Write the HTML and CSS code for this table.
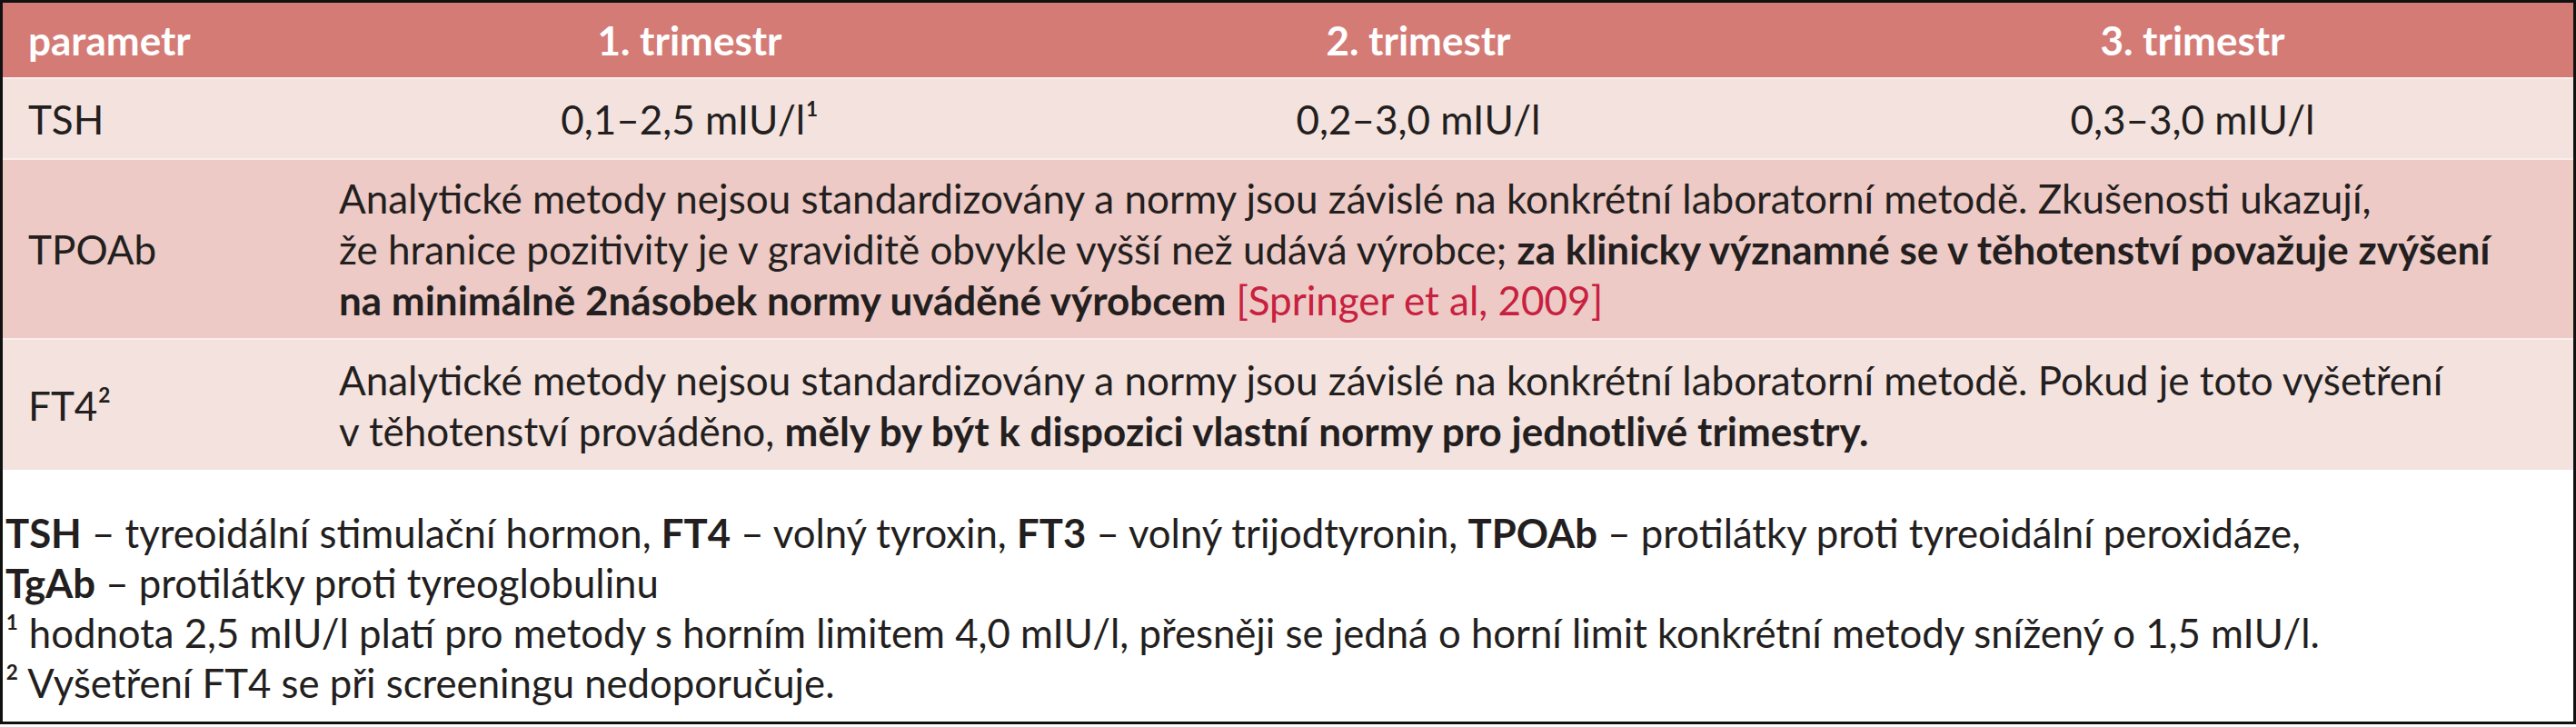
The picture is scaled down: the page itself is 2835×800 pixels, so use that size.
FILE: index.html
```html
<!DOCTYPE html>
<html lang="cs">
<head>
<meta charset="utf-8">
<title>Referenční meze</title>
<link rel="stylesheet" href="styles.css">
</head>
<body>
<div class="frame">
  <table class="tbl">
    <colgroup><col class="c1"><col class="c2"><col class="c3"><col class="c4"></colgroup>
    <thead>
      <tr><th class="left">parametr</th><th>1. trimestr</th><th>2. trimestr</th><th class="last">3. trimestr</th></tr>
    </thead>
    <tbody>
      <tr class="light r-tsh"><td class="left">TSH</td><td>0,1–2,5 mIU/l¹</td><td>0,2–3,0 mIU/l</td><td class="last">0,3–3,0 mIU/l</td></tr>
      <tr class="dark r-tpo"><td class="left">TPOAb</td><td colspan="3" class="desc">Analytické metody nejsou standardizovány a normy jsou závislé na konkrétní laboratorní metodě. Zkušenosti ukazují,<br>že hranice pozitivity je v graviditě obvykle vyšší než udává výrobce; <b>za klinicky významné se v těhotenství považuje zvýšení<br>na minimálně 2násobek normy uváděné výrobcem</b> <span class="ref">[Springer et al, 2009]</span></td></tr>
      <tr class="light r-ft4"><td class="left">FT4²</td><td colspan="3" class="desc">Analytické metody nejsou standardizovány a normy jsou závislé na konkrétní laboratorní metodě. Pokud je toto vyšetření<br>v těhotenství prováděno, <b>měly by být k dispozici vlastní normy pro jednotlivé trimestry.</b></td></tr>
    </tbody>
  </table>
  <div class="notes">
    <p><b>TSH</b> – tyreoidální stimulační hormon, <b>FT4</b> – volný tyroxin, <b>FT3</b> – volný trijodtyronin, <b>TPOAb</b> – protilátky proti tyreoidální peroxidáze,<br><b>TgAb</b> – protilátky proti tyreoglobulinu</p>
    <p>¹ hodnota 2,5 mIU/l platí pro metody s horním limitem 4,0 mIU/l, přesněji se jedná o horní limit konkrétní metody snížený o 1,5 mIU/l.</p>
    <p>² Vyšetření FT4 se při screeningu nedoporučuje.</p>
  </div>
</div>
</body>
</html>
```

FILE: styles.css
```css
html, body { margin: 0; background: #fff; }
body { font-family: Lato, "Open Sans", sans-serif; color: #231f20; }
.frame {
  box-sizing: border-box;
  width: 2835px;
  height: 797px;
  border: 3px solid #111;
  display: flex;
  flex-direction: column;
}
.tbl {
  width: 100%;
  border-collapse: collapse;
  table-layout: fixed;
  font-size: 44px;
  line-height: 56px;
}
col.c1 { width: 347px; }
col.c2 { width: 818px; }
col.c3 { width: 786px; }
col.c4 { width: 878px; }
.tbl th {
  background: #d47b76;
  color: #fff;
  font-weight: 700;
  height: 82px;
  padding: 0;
  text-align: center;
}
.tbl td { padding: 0; text-align: center; vertical-align: middle; }
.tbl .left { text-align: left; padding-left: 28px; }
.tbl .last { padding-left: 40px; }
.tbl tbody tr { border-top: 2px solid #f9eeec; }
.light td { background: #f4e2de; }
.dark td { background: #edcac5; }
.r-tsh td { height: 87px; }
.r-tpo td { height: 196px; }
.r-ft4 td { height: 143px; }
.tbl td.desc { text-align: left; padding-left: 23px; white-space: nowrap; }
.ref { color: #c8203f; }
.notes {
  flex: 1;
  padding: 42px 0 0 3px;
  font-size: 43.7px;
  line-height: 55px;
}
.notes p { margin: 0; white-space: nowrap; }
```
